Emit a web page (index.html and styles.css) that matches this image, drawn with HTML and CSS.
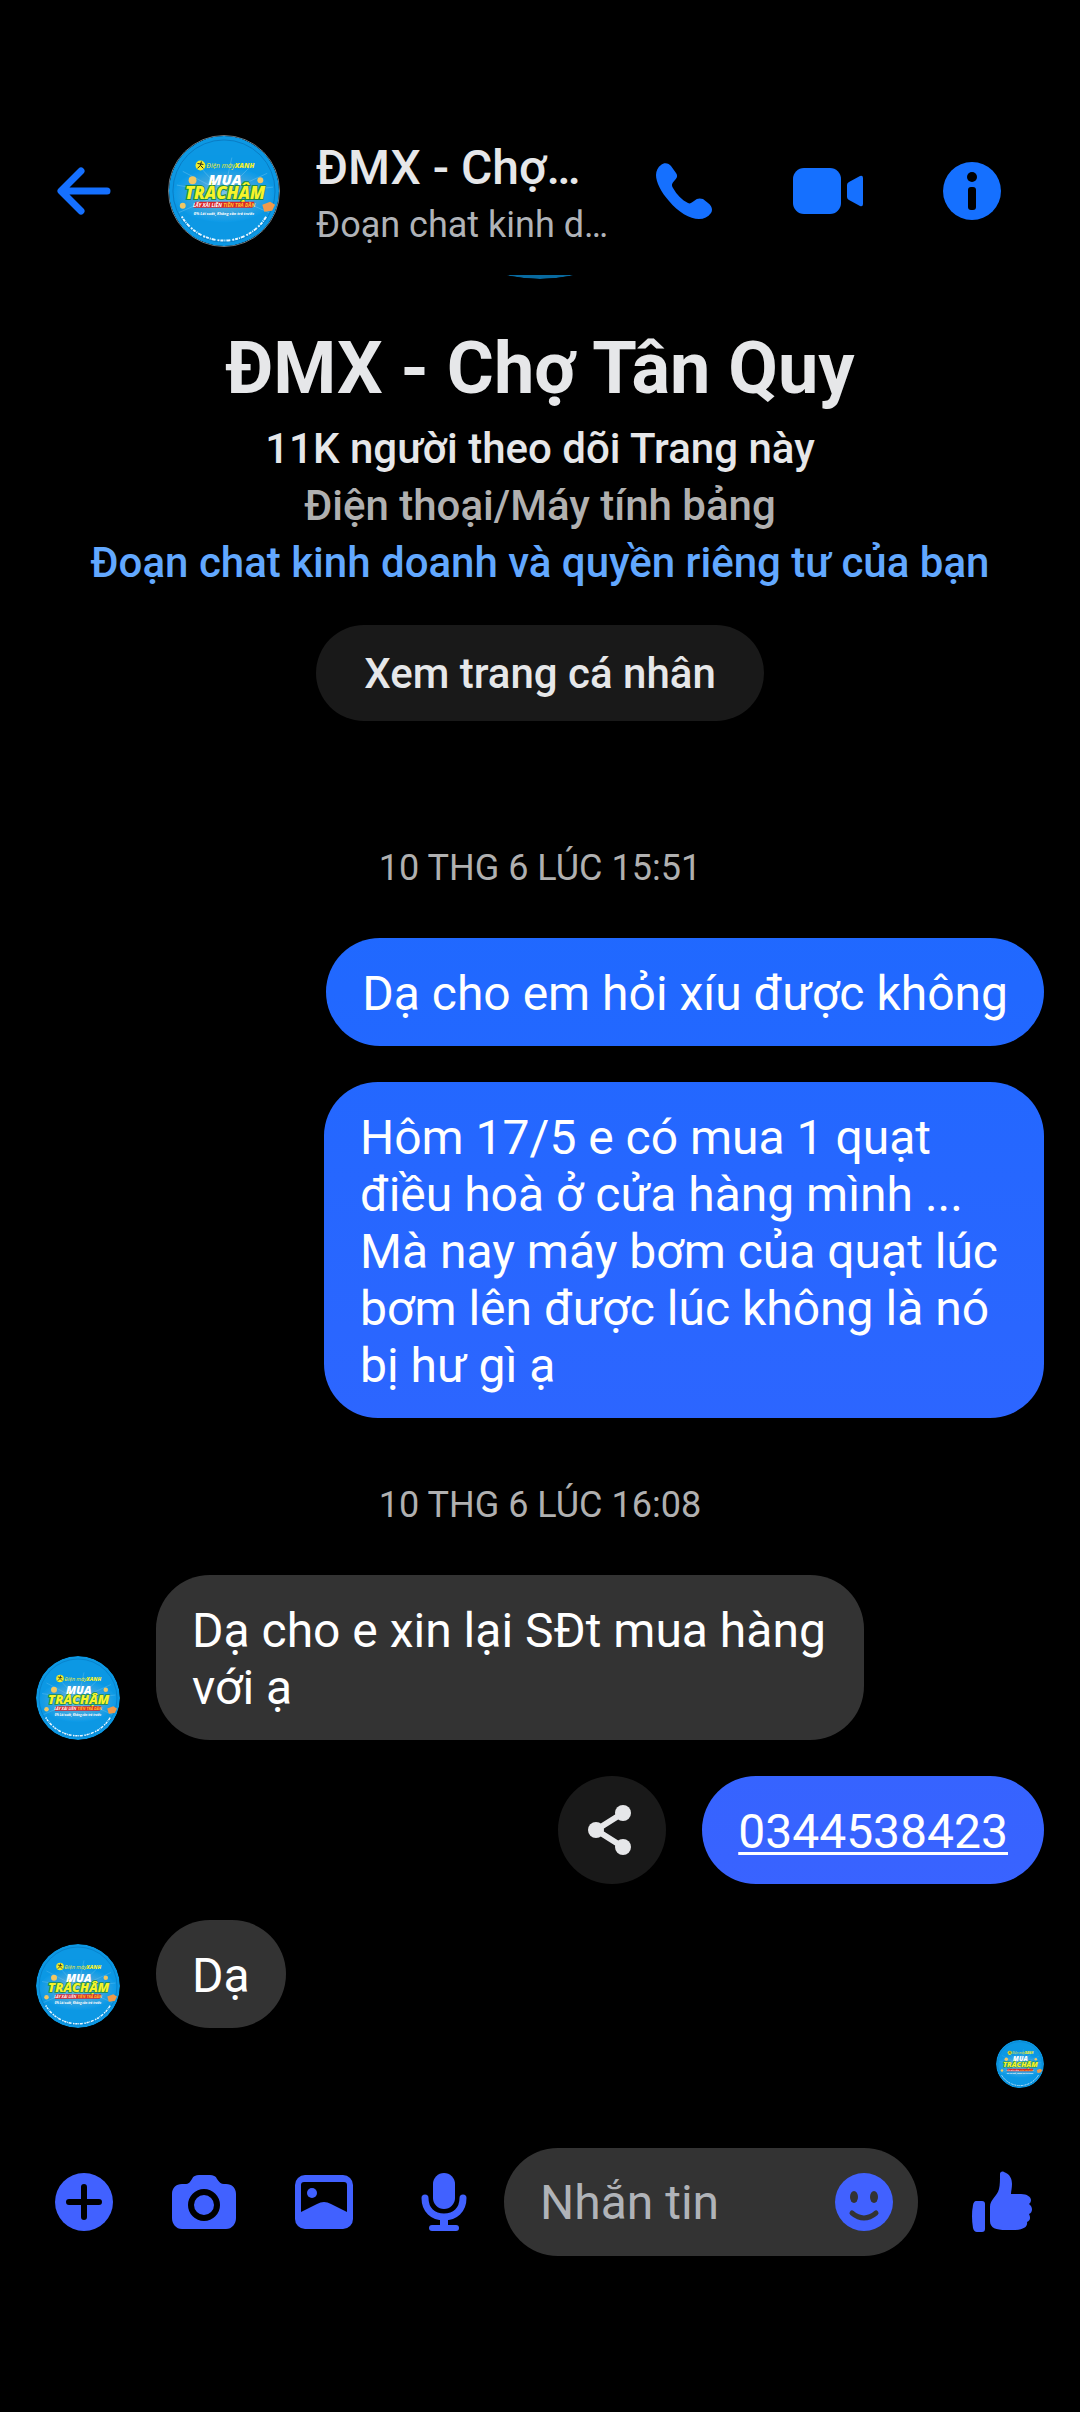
FILE: index.html
```html
<!DOCTYPE html>
<html lang="vi">
<head>
    <meta charset="UTF-8">
    <meta name="viewport" content="width=device-width, initial-scale=1.0">
    <title>ĐMX - Chợ Tân Quy</title>
    <link rel="stylesheet" href="styles.css">
</head>
<body>
    <header class="topbar">
        <button class="icon-button back" aria-label="Quay lại">
            <svg width="56" height="48" viewBox="0 0 56 48" fill="none" stroke="currentColor" stroke-width="7" stroke-linecap="round" stroke-linejoin="round"><path d="M25 4L5 24L25 44M6 24H51"/></svg>
        </button>
        <a class="peer" href="#profile">
            <!-- shop logo, the other avatars reuse it -->
            <svg class="avatar avatar-top" viewBox="0 0 112 112">
                <defs>
                    <radialGradient id="glow" cx="50%" cy="50%" r="50%">
                        <stop offset="0" stop-color="#6fbce6"/>
                        <stop offset="0.6" stop-color="#3ba5de"/>
                        <stop offset="1" stop-color="#0b9ae8"/>
                    </radialGradient>
                </defs>
                <g id="logo">
                    <circle cx="56" cy="56" r="56" fill="#0c98e4"/>
                    <ellipse cx="56" cy="60" rx="52" ry="28" fill="url(#glow)"/>
                    <path d="M56 58L8 50M56 58L14 36M56 58L30 30M56 58L64 22M56 58L84 30M56 58L100 38M56 58L106 52M56 58L10 78M56 58L102 78" stroke="#a4dbf5" opacity="0.3"/>
                    <circle cx="56" cy="56" r="52" fill="none" stroke="#0a7cc4" stroke-width="1"/>
                    <circle cx="32" cy="30" r="5" fill="#f3ef2b"/>
                    <path d="M33 26l-1 4l3 3M32 30l-3 3M29 28l6 1" fill="none" stroke="#222" stroke-width="1"/>
                    <text x="38" y="33" class="logo-brand">Điện máy<tspan class="logo-brand-bold">XANH</tspan></text>
                    <g fill="#f2c763">
                        <circle cx="24" cy="45" r="4"/>
                        <circle cx="93" cy="45" r="3"/>
                        <circle cx="14" cy="71" r="3"/>
                        <path d="M95 70l8-3l5 3l-3 6l-8 1z" fill="#f09a4a"/>
                    </g>
                    <text x="57" y="64" class="logo-tra">TRẢCHẬM</text>
                    <text x="57" y="50" class="logo-mua">MUA</text>
                    <path d="M27 67h60l-2 6h-60z" fill="#d9252b"/>
                    <text x="56" y="72" class="logo-small">LẤY XÀI LIỀN <tspan fill="#ffc62e">TIỀN TRẢ DẦN</tspan></text>
                    <text x="56" y="80" class="logo-note">0% Lãi suất, Không cần trả trước</text>
                    <path d="M13 82A50 50 0 0 0 99 82" fill="none" stroke="#e8f6ff" stroke-width="2" stroke-dasharray="2 1 3 1 1 1 4 2"/>
                </g>
            </svg>
            <span class="peer-text">
                <span class="peer-name">ĐMX - Chợ…</span>
                <span class="peer-sub">Đoạn chat kinh d…</span>
            </span>
        </a>
        <button class="icon-button action" aria-label="Gọi">
            <svg width="56" height="56" viewBox="0 0 56 56" fill="currentColor"><path d="M5 2C8-1 13 0 15 3L20 10C22 13 21 15 19 17C16 20 15 22 17 25C21 32 26 37 32 40C34 41 35 40 38 38C41 35 44 35 47 36L52 40C56 43 57 47 55 50C52 54 48 56 43 56C34 56 22 49 13 38C5 29 0 19 0 12C0 8 2 4 5 2Z"/></svg>
        </button>
        <button class="icon-button action" aria-label="Gọi video">
            <svg width="70" height="46" viewBox="0 0 70 46" fill="currentColor"><rect width="48" height="46" rx="11"/><path d="M56 14L67 8Q70 7 70 10V36Q70 39 67 38L56 32Q54 31 54 29V17Q54 15 56 14Z"/></svg>
        </button>
        <button class="icon-button action" aria-label="Thông tin">
            <svg width="60" height="60" viewBox="0 0 60 60"><circle cx="30" cy="30" r="29" fill="currentColor"/><circle cx="30" cy="16" r="5"/><rect x="26" y="26" width="8" height="23" rx="3"/></svg>
        </button>
    </header>

    <main class="chat">
        <section class="profile" id="profile">
            <svg class="avatar avatar-big" viewBox="0 0 112 112"><use href="#logo"/></svg>
            <h1>ĐMX - Chợ Tân Quy</h1>
            <p>11K người theo dõi Trang này</p>
            <p class="muted">Điện thoại/Máy tính bảng</p>
            <p><a href="#privacy">Đoạn chat kinh doanh và quyền riêng tư của bạn</a></p>
            <button class="profile-button">Xem trang cá nhân</button>
        </section>

        <time class="date date-first">10 THG 6 LÚC 15:51</time>
        <div class="row sent"><div class="bubble">Dạ cho em hỏi xíu được không</div></div>
        <div class="row sent"><div class="bubble">Hôm 17/5 e có mua 1 quạt điều hoà ở cửa hàng mình ... Mà nay máy bơm của quạt lúc bơm lên được lúc không là nó bị hư gì ạ</div></div>

        <time class="date">10 THG 6 LÚC 16:08</time>
        <div class="row received">
            <svg class="avatar avatar-row" viewBox="0 0 112 112"><use href="#logo"/></svg>
            <div class="bubble">Dạ cho e xin lại SĐt mua hàng với ạ</div>
        </div>
        <div class="row sent">
            <button class="share" aria-label="Chia sẻ">
                <svg width="48" height="52" viewBox="0 0 48 52" fill="currentColor"><path d="M8 26L35 9M8 26L35 43" stroke="currentColor" stroke-width="6"/><circle cx="8" cy="26" r="8"/><circle cx="35" cy="9" r="8"/><circle cx="35" cy="43" r="8"/></svg>
            </button>
            <div class="bubble"><a href="tel:0344538423">0344538423</a></div>
        </div>
        <div class="row received">
            <svg class="avatar avatar-row" viewBox="0 0 112 112"><use href="#logo"/></svg>
            <div class="bubble">Dạ</div>
        </div>
        <div class="seen"><svg class="avatar avatar-seen" viewBox="0 0 112 112"><use href="#logo"/></svg></div>
    </main>

    <form class="composer">
        <button type="button" class="icon-button tool" aria-label="Thêm">
            <svg width="60" height="60" viewBox="0 0 60 60"><circle cx="30" cy="30" r="29" fill="currentColor"/><path d="M30 15V45M15 30H45" stroke="#000" stroke-width="6" stroke-linecap="round"/></svg>
        </button>
        <button type="button" class="icon-button tool" aria-label="Máy ảnh">
            <svg width="64" height="60" viewBox="0 0 64 60"><path d="M10 12H13C17 12 18 10 20 7C21 4 24 3 27 3H38C41 3 44 4 45 7C47 10 49 12 52 12H54C60 12 64 16 64 22V46C64 52 60 57 54 57H10C4 57 0 52 0 46V22C0 16 4 12 10 12Z" fill="currentColor"/><circle cx="32" cy="33" r="13" fill="none" stroke="#000" stroke-width="6"/></svg>
        </button>
        <button type="button" class="icon-button tool" aria-label="Ảnh">
            <svg width="60" height="60" viewBox="0 0 60 60"><rect x="1" y="3" width="58" height="54" rx="10" fill="currentColor"/><path d="M7 40V13Q7 10 10 10H50Q53 10 53 13V40L37 32Q30 28 23 32Z"/><circle cx="18" cy="21" r="5" fill="currentColor"/></svg>
        </button>
        <button type="button" class="icon-button tool" aria-label="Ghi âm">
            <svg width="46" height="60" viewBox="0 0 46 60" fill="none" stroke="currentColor" stroke-linecap="round"><rect x="12" y="1" width="22" height="36" rx="11" fill="currentColor" stroke="none"/><path d="M4 26C4 38 12 45 23 45S42 38 42 26" stroke-width="7"/><path d="M23 46V55" stroke-width="8"/><path d="M11 56H35" stroke-width="6"/></svg>
        </button>
        <div class="field">
            <input type="text" placeholder="Nhắn tin" aria-label="Nhắn tin">
            <button type="button" class="icon-button emoji" aria-label="Biểu tượng cảm xúc">
                <svg width="60" height="60" viewBox="0 0 60 60"><circle cx="30" cy="30" r="29" fill="currentColor"/><ellipse cx="20" cy="25" rx="4" ry="6" fill="#333"/><ellipse cx="40" cy="25" rx="4" ry="6" fill="#333"/><path d="M18 41Q30 51 42 41" fill="none" stroke="#333" stroke-width="5" stroke-linecap="round"/></svg>
            </button>
        </div>
        <button type="button" class="icon-button like" aria-label="Thích">
            <svg width="60" height="62" viewBox="0 0 60 62" fill="currentColor"><path d="M4 30H10Q13 30 13 33V58Q13 61 10 61H5Q2 61 1 57Q-1 45 1 34Q2 30 4 30Z"/><path d="M28 3C28 1 30 0 32 1C38 3 40 8 40 13C40 17 39 20 39 23H49C55 23 59 26 59 29C59 31 58 32 57 33C61 36 61 41 57 43C59 47 58 50 55 51C56 56 51 59 41 59H34C24 59 18 57 18 50V36C18 28 25 26 27 18C28 14 28 8 28 3Z"/></svg>
        </button>
    </form>
</body>
</html>
```
FILE: styles.css
```css
* {
    box-sizing: border-box;
}
body {
    margin: 0;
    min-height: 100vh;
    display: flex;
    flex-direction: column;
    background-color: #000;
    color: #e6e7e9;
    font-family: Roboto, "Noto Sans", sans-serif;
    font-size: 48px;
    line-height: 57px;
}
button {
    border: none;
    padding: 0;
    font-family: inherit;
    cursor: pointer;
}
svg {
    display: block;
    flex-shrink: 0;
}
.icon-button {
    display: flex;
    justify-content: center;
    align-items: center;
    flex-shrink: 0;
    background: none;
    color: #4161ff;
}

/* avatars */
.avatar {
    border-radius: 50%;
}
.avatar-top {
    width: 112px;
    height: 112px;
    border: 1px solid #6f7d86;
}
.avatar-big {
    width: 288px;
    height: 288px;
    opacity: 0.7;
}
.avatar-row {
    width: 84px;
    height: 84px;
}
.avatar-seen {
    width: 48px;
    height: 48px;
}
.logo-brand, .logo-mua, .logo-tra, .logo-small, .logo-note {
    font-family: "Open Sans", sans-serif;
    font-style: italic;
}
.logo-brand {
    font-size: 7px;
    fill: #f3ef2b;
}
.logo-brand-bold {
    font-weight: 800;
}
.logo-mua {
    font-size: 15px;
    font-weight: 800;
    fill: #fff;
    text-anchor: middle;
}
.logo-tra {
    font-size: 17px;
    font-weight: 800;
    fill: #f6f32a;
    stroke: #1b8a4a;
    stroke-width: 2px;
    paint-order: stroke;
    text-anchor: middle;
}
.logo-small {
    font-size: 5px;
    font-weight: 700;
    fill: #fff;
    text-anchor: middle;
}
.logo-note {
    font-size: 4px;
    font-weight: 700;
    fill: #fff;
    text-anchor: middle;
}

/* top bar */
.topbar {
    display: flex;
    padding: 135px 36px 28px 0;
    background-color: #000;
    z-index: 1;
}
.topbar .icon-button {
    color: #1570ff;
}
.back {
    width: 168px;
}
.action {
    width: 144px;
}
.peer {
    flex: 1;
    min-width: 0;
    display: flex;
    gap: 36px;
    color: inherit;
    text-decoration: none;
}
.peer-text {
    min-width: 0;
    padding-top: 4px;
    display: flex;
    flex-direction: column;
    gap: 8px;
}
.peer-name, .peer-sub {
    overflow: hidden;
    white-space: nowrap;
    text-overflow: ellipsis;
}
.peer-name {
    font-weight: 500;
}
.peer-sub {
    font-size: 36px;
    line-height: 43px;
    color: #b0b3b8;
}

/* conversation */
.chat {
    flex: 1;
    display: flex;
    flex-direction: column;
    gap: 36px;
    padding: 0 36px;
    overflow: hidden;
}
.profile {
    display: flex;
    flex-direction: column;
    align-items: center;
    margin-top: -284px;
    font-size: 42px;
    font-weight: 500;
    text-align: center;
}
.profile h1 {
    margin: 48px 0 9px;
    font-size: 72px;
    line-height: 84px;
}
.profile p {
    margin: 0;
}
.profile .muted {
    color: #b0b0b0;
}
.profile a {
    color: #62a8ff;
    text-decoration: none;
}
.profile-button {
    margin-top: 34px;
    height: 96px;
    padding: 0 48px;
    border-radius: 48px;
    background-color: #191919;
    color: #e6e7e9;
    font-size: 42px;
    font-weight: 500;
}
.date {
    padding-top: 30px;
    padding-bottom: 12px;
    text-align: center;
    font-size: 36px;
    line-height: 43px;
    color: #b0b0b0;
}
.date-first {
    padding-top: 90px;
}
.row {
    display: flex;
    align-items: flex-end;
    gap: 36px;
}
.bubble {
    padding: 27px 36px 24px;
    border-radius: 54px;
    color: #fff;
}
.bubble a {
    color: inherit;
    text-underline-offset: 4px;
    text-decoration-thickness: 3px;
}
.sent {
    justify-content: flex-end;
}
.sent .bubble {
    max-width: 720px;
    background: linear-gradient(#1570ff 8%, #2168ff 41%, #4161ff 91%) fixed;
}
.received .bubble {
    max-width: 708px;
    background-color: #333;
}
.share {
    width: 108px;
    height: 108px;
    display: flex;
    justify-content: center;
    align-items: center;
    border-radius: 50%;
    background-color: #191919;
    color: #e6e7e9;
}
.seen {
    display: flex;
    justify-content: flex-end;
    margin-top: -24px;
}

/* message box */
.composer {
    display: flex;
    padding: 24px 36px 156px 24px;
}
.tool {
    width: 120px;
}
.field {
    flex: 1;
    min-width: 0;
    height: 108px;
    display: flex;
    border-radius: 54px;
    background-color: #333;
}
.field input {
    flex: 1;
    min-width: 0;
    padding: 0 0 0 36px;
    border: none;
    outline: none;
    background: none;
    color: #fff;
    font-family: inherit;
    font-size: 48px;
}
.field input::placeholder {
    color: #b0b3b8;
}
.emoji {
    width: 108px;
}
.like {
    width: 84px;
    margin-left: 42px;
}
```
